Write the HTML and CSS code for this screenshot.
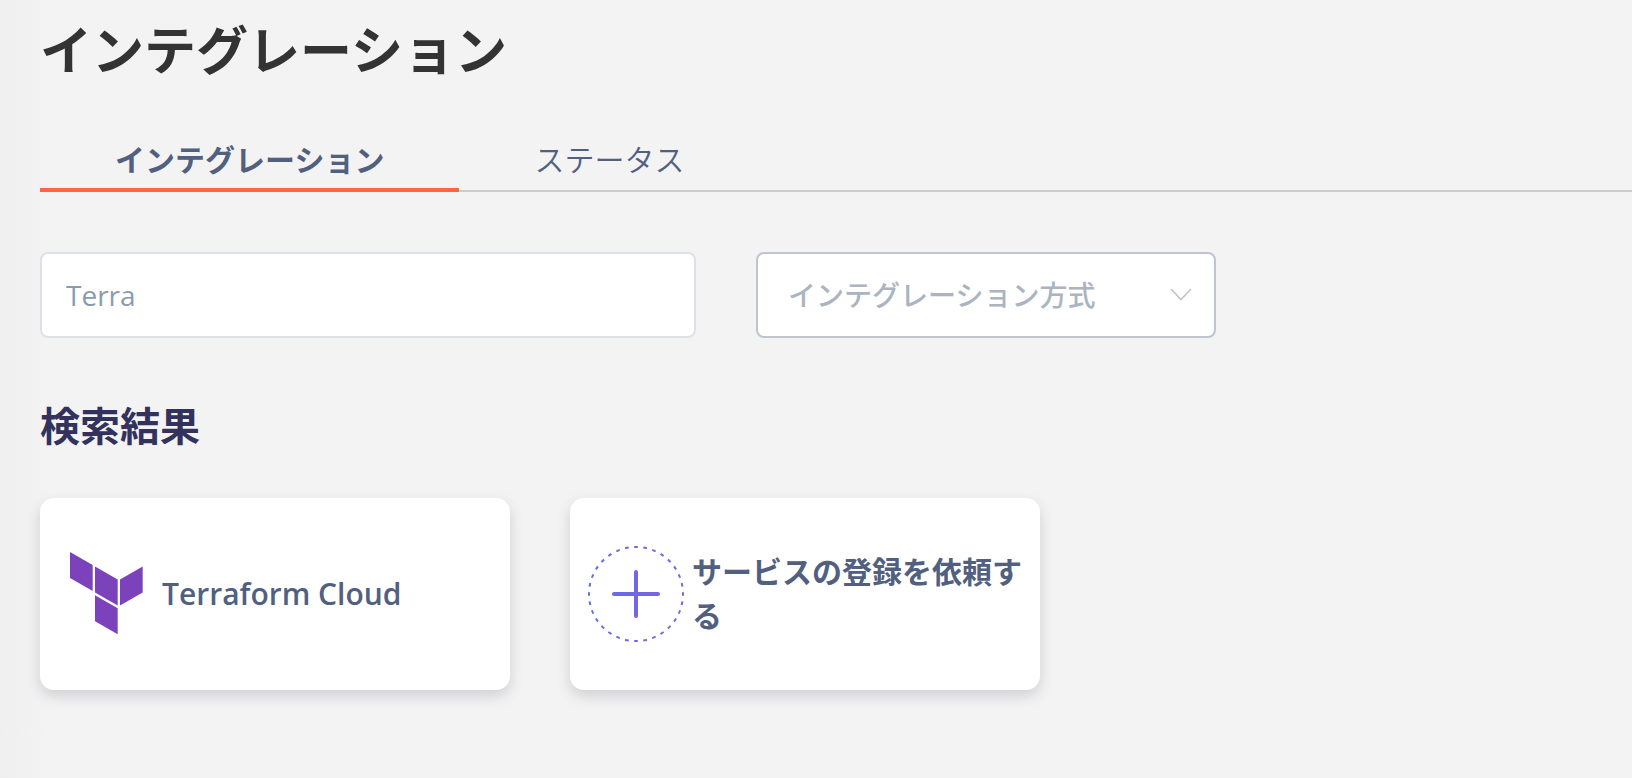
FILE: index.html
```html
<!DOCTYPE html>
<html lang="ja">
<head>
    <meta charset="UTF-8">
    <meta name="viewport" content="width=device-width, initial-scale=1.0">
    <title>インテグレーション</title>
    <link rel="stylesheet" href="styles.css">
</head>
<body>

    <main class="page">
        <h1>インテグレーション</h1>

        <nav class="tabs">
            <a href="#integrations" class="tab tab-active">インテグレーション</a>
            <a href="#status" class="tab">ステータス</a>
        </nav>

        <form class="filters">
            <input type="text" class="search" value="Terra" aria-label="検索">
            <div class="select-box">
                <select class="method" aria-label="インテグレーション方式">
                    <option>インテグレーション方式</option>
                </select>
                <svg class="chevron" width="22" height="14" viewBox="0 0 22 14">
                    <path d="M1 1l10 10.500L21 1" fill="none" stroke="#c0c4cf" stroke-width="1.600"/>
                </svg>
            </div>
        </form>

        <h2>検索結果</h2>

        <div class="cards">
            <a href="#terraform" class="card">
                <svg class="logo" width="74" height="84" viewBox="0 0 74 84" fill="#7b42bc">
                    <path d="M0 0l22.700 13v26L0 26z"/>
                    <path d="M25 14.600l22.700 13v26L25 40.600z"/>
                    <path d="M50 27.600l22.700-13v26L50 53.600z"/>
                    <path d="M25 43.300l22.700 13v26L25 69.300z"/>
                </svg>
                <span class="card-name">Terraform Cloud</span>
            </a>

            <a href="#request" class="card">
                <svg class="plus" width="96" height="96" viewBox="0 0 96 96" fill="none" stroke="url(#plusColor)">
                    <defs>
                        <linearGradient id="plusColor" gradientUnits="userSpaceOnUse" x1="0" y1="0" x2="96" y2="0">
                            <stop offset="0" stop-color="#5b6fe6"/>
                            <stop offset="1" stop-color="#8560e2"/>
                        </linearGradient>
                    </defs>
                    <circle cx="48" cy="48" r="47" stroke-width="2" pathLength="320" stroke-dasharray="4 6" stroke-dashoffset="2"/>
                    <path d="M48 26v44M26 48h44" stroke-width="4" stroke-linecap="round"/>
                </svg>
                <span class="card-name card-request">サービスの登録を依頼する</span>
            </a>
        </div>
    </main>

</body>
</html>
```

FILE: styles.css
```css
* {
    box-sizing: border-box;
}
body {
    font-family: "Open Sans", "Noto Sans CJK JP", sans-serif;
    margin: 0;
    background: linear-gradient(to right, #efefef, #f3f3f3 48px);
    color: #333;
}
.page {
    padding: 12px 0 40px 40px;
}
h1 {
    margin: 0;
    font-size: 52px;
    line-height: 76px;
}
.tabs {
    display: flex;
    margin-top: 50px;
    box-shadow: inset 0 -2px #ccc;
}
.tab {
    padding: 0 75px 6px;
    border-bottom: 4px solid transparent;
    font-size: 30px;
    line-height: 44px;
    font-weight: 350;
    color: #526080;
    text-decoration: none;
}
.tab-active {
    font-weight: 700;
    border-bottom-color: #ff6542;
}
.filters {
    display: flex;
    gap: 60px;
    margin-top: 60px;
}
.search, .method {
    height: 86px;
    border-radius: 8px;
    background-color: white;
    font-family: inherit;
    font-size: 28px;
    font-weight: 500;
}
.search {
    flex: 0 1 656px;
    min-width: 0;
    padding: 0 24px;
    border: 2px solid #dde1e6;
    color: #8a9bb0;
}
.select-box {
    display: grid;
    align-items: center;
    flex: 0 1 460px;
}
.method, .chevron {
    grid-area: 1 / 1;
}
.method {
    width: 100%;
    padding: 0 30px;
    border: 2px solid #bfc4d0;
    color: #abb4bf;
    appearance: none;
}
.chevron {
    justify-self: end;
    margin-right: 24px;
    pointer-events: none;
}
h2 {
    margin: 60px 0 0;
    font-size: 40px;
    line-height: 56px;
    color: #32325d;
}
.cards {
    display: flex;
    gap: 60px;
    margin-top: 44px;
}
.card {
    display: flex;
    align-items: center;
    flex: 0 1 470px;
    min-height: 192px;
    padding: 0 10px 0 18px;
    border-radius: 14px;
    background: white;
    box-shadow: 0 6px 14px rgba(50, 50, 80, 0.18);
    color: #526080;
    text-decoration: none;
}
.card-name {
    font-size: 30px;
    line-height: 44px;
    font-weight: 600;
}
.card-request {
    font-weight: 700;
}
.logo {
    flex: none;
    margin: 0 18px 0 12px;
}
.plus {
    flex: none;
    margin-right: 8px;
}
```
